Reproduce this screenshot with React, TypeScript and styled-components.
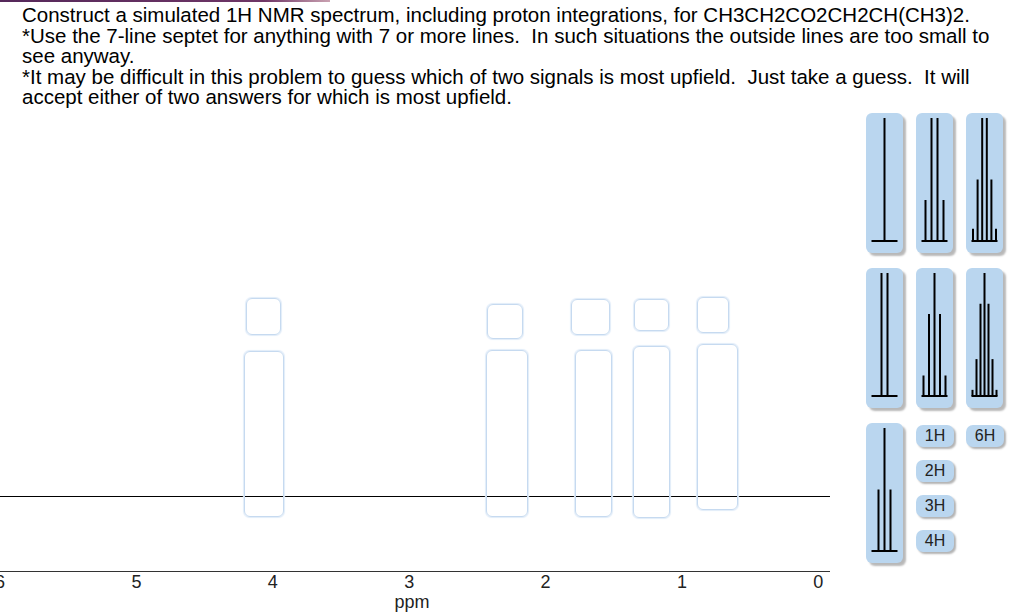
import React from "react";
import styled, { createGlobalStyle } from "styled-components";

const GlobalStyle = createGlobalStyle`
  html, body { margin: 0; padding: 0; background: #fff; }
  body {
    width: 1024px;
    height: 615px;
    overflow: hidden;
    font-family: "Liberation Sans", Arial, sans-serif;
  }
`;

const Page = styled.div`
  width: 1024px;
  height: 615px;
  display: flex;
  flex-direction: column;
  overflow: hidden;
`;

const TopRule = styled.div`
  flex: none;
  width: 330px;
  height: 2px;
  background: linear-gradient(90deg, #55285a, #6e3566 80%, rgba(150, 70, 100, 0.5));
`;

const Instructions = styled.div`
  flex: none;
  height: 108px;
  box-sizing: border-box;
  padding: 3px 0 0 22px;
  font-size: 20.5px;
  line-height: 20.5px;
  color: #000;
  white-space: pre;
`;

const Workspace = styled.div`
  flex: 1;
  display: flex;
  align-items: flex-start;
`;

const Canvas = styled.div`
  flex: none;
  width: 830px;
  display: flex;
  flex-direction: column;
`;

const PlotArea = styled.div`
  position: relative;
  flex: none;
  height: 386px;
  border-bottom: 1px solid #000;
`;

const Slot = styled.div`
  position: absolute;
  box-sizing: border-box;
  border: 1px solid #c6daf0;
  box-shadow: 0 0 1px 0.5px #e2edf9;
  border-radius: 6px;
  background: transparent;
`;

const AxisLine = styled.div`
  flex: none;
  margin-top: 74px;
  border-top: 1px solid #333;
`;

const TickRow = styled.div`
  display: flex;
  margin-left: -68.2px;
  font-size: 18px;
  line-height: 20px;
  color: #222;
`;

const Tick = styled.span`
  flex: none;
  width: 136.4px;
  text-align: center;
`;

const AxisTitle = styled.div`
  width: 824px;
  text-align: center;
  font-size: 18px;
  line-height: 20px;
  color: #222;
`;

const Palette = styled.div`
  flex: none;
  margin: 3px 0 0 36px;
  display: grid;
  grid-template-columns: 38px 38px 38px;
  grid-template-rows: 140px 140px 140px;
  column-gap: 12px;
  row-gap: 15px;
`;

const Tile = styled.div`
  width: 37px;
  height: 140px;
  border-radius: 6px;
  background: #bad6ef;
  box-shadow: 3px 3px 2px rgba(0, 0, 0, 0.28);
  svg { display: block; }
`;

const ButtonStack = styled.div`
  display: flex;
  flex-direction: column;
  align-items: flex-start;
  gap: 13px;
  padding-top: 2px;
`;

const IntButton = styled.button`
  width: 38px;
  height: 22px;
  padding: 0;
  border: none;
  border-radius: 7px;
  background: #bad6ef;
  box-shadow: 2px 2px 2px rgba(0, 0, 0, 0.3);
  font-family: "Liberation Sans", Arial, sans-serif;
  font-size: 16px;
  color: #222;
  display: flex;
  align-items: center;
  justify-content: center;
  cursor: pointer;
`;

type Pattern = { spacing: number; ints: number[] };

const patterns: Record<string, Pattern> = {
  singlet: { spacing: 0, ints: [1] },
  doublet: { spacing: 6, ints: [1, 1] },
  triplet: { spacing: 6, ints: [1, 2, 1] },
  quartet: { spacing: 6, ints: [1, 3, 3, 1] },
  pentet: { spacing: 5.5, ints: [1, 4, 6, 4, 1] },
  sextet: { spacing: 4.6, ints: [1, 5, 10, 10, 5, 1] },
  septet: { spacing: 4, ints: [1, 6, 15, 20, 15, 6, 1] },
};

const Multiplet: React.FC<{ kind: string }> = ({ kind }) => {
  const p = patterns[kind];
  const max = Math.max(...p.ints);
  const n = p.ints.length;
  const cx = 18.5;
  const base = 128;
  const full = 123;
  return (
    <svg width="37" height="140" viewBox="0 0 37 140">
      <line x1="5.5" y1={base} x2="31.5" y2={base} stroke="#000" strokeWidth="2" />
      {p.ints.map((v, i) => {
        const x = cx + (i - (n - 1) / 2) * p.spacing;
        return (
          <line
            key={i}
            x1={x}
            x2={x}
            y1={base}
            y2={base - (full * v) / max}
            stroke="#000"
            strokeWidth="2"
          />
        );
      })}
    </svg>
  );
};

const TOP = 110;
const slots = [
  { i: [246, 298, 35, 37], p: [244, 351, 40, 166] },
  { i: [487, 304, 36, 35], p: [486, 350, 42, 167] },
  { i: [571, 299, 39, 36], p: [575, 350, 37, 167] },
  { i: [634, 299, 35, 32], p: [633, 346, 37, 172] },
  { i: [697, 297, 32, 36], p: [697, 344, 41, 166] },
];

const box = (r: number[]) => ({ left: r[0], top: r[1] - TOP, width: r[2], height: r[3] });

export default function App() {
  return (
    <Page>
      <GlobalStyle />
      <TopRule />
      <Instructions>
        {"Construct a simulated 1H NMR spectrum, including proton integrations, for CH3CH2CO2CH2CH(CH3)2.\n" +
          "*Use the 7-line septet for anything with 7 or more lines.  In such situations the outside lines are too small to\n" +
          "see anyway.\n" +
          "*It may be difficult in this problem to guess which of two signals is most upfield.  Just take a guess.  It will\n" +
          "accept either of two answers for which is most upfield."}
      </Instructions>
      <Workspace>
        <Canvas>
          <PlotArea>
            {slots.map((s, k) => (
              <React.Fragment key={k}>
                <Slot style={box(s.i)} />
                <Slot style={box(s.p)} />
              </React.Fragment>
            ))}
          </PlotArea>
          <AxisLine />
          <TickRow>
            {[6, 5, 4, 3, 2, 1, 0].map((t) => (
              <Tick key={t}>{t}</Tick>
            ))}
          </TickRow>
          <AxisTitle>ppm</AxisTitle>
        </Canvas>
        <Palette>
          <Tile><Multiplet kind="singlet" /></Tile>
          <Tile><Multiplet kind="quartet" /></Tile>
          <Tile><Multiplet kind="sextet" /></Tile>
          <Tile><Multiplet kind="doublet" /></Tile>
          <Tile><Multiplet kind="pentet" /></Tile>
          <Tile><Multiplet kind="septet" /></Tile>
          <Tile><Multiplet kind="triplet" /></Tile>
          <ButtonStack>
            <IntButton>1H</IntButton>
            <IntButton>2H</IntButton>
            <IntButton>3H</IntButton>
            <IntButton>4H</IntButton>
          </ButtonStack>
          <ButtonStack>
            <IntButton>6H</IntButton>
          </ButtonStack>
        </Palette>
      </Workspace>
    </Page>
  );
}
